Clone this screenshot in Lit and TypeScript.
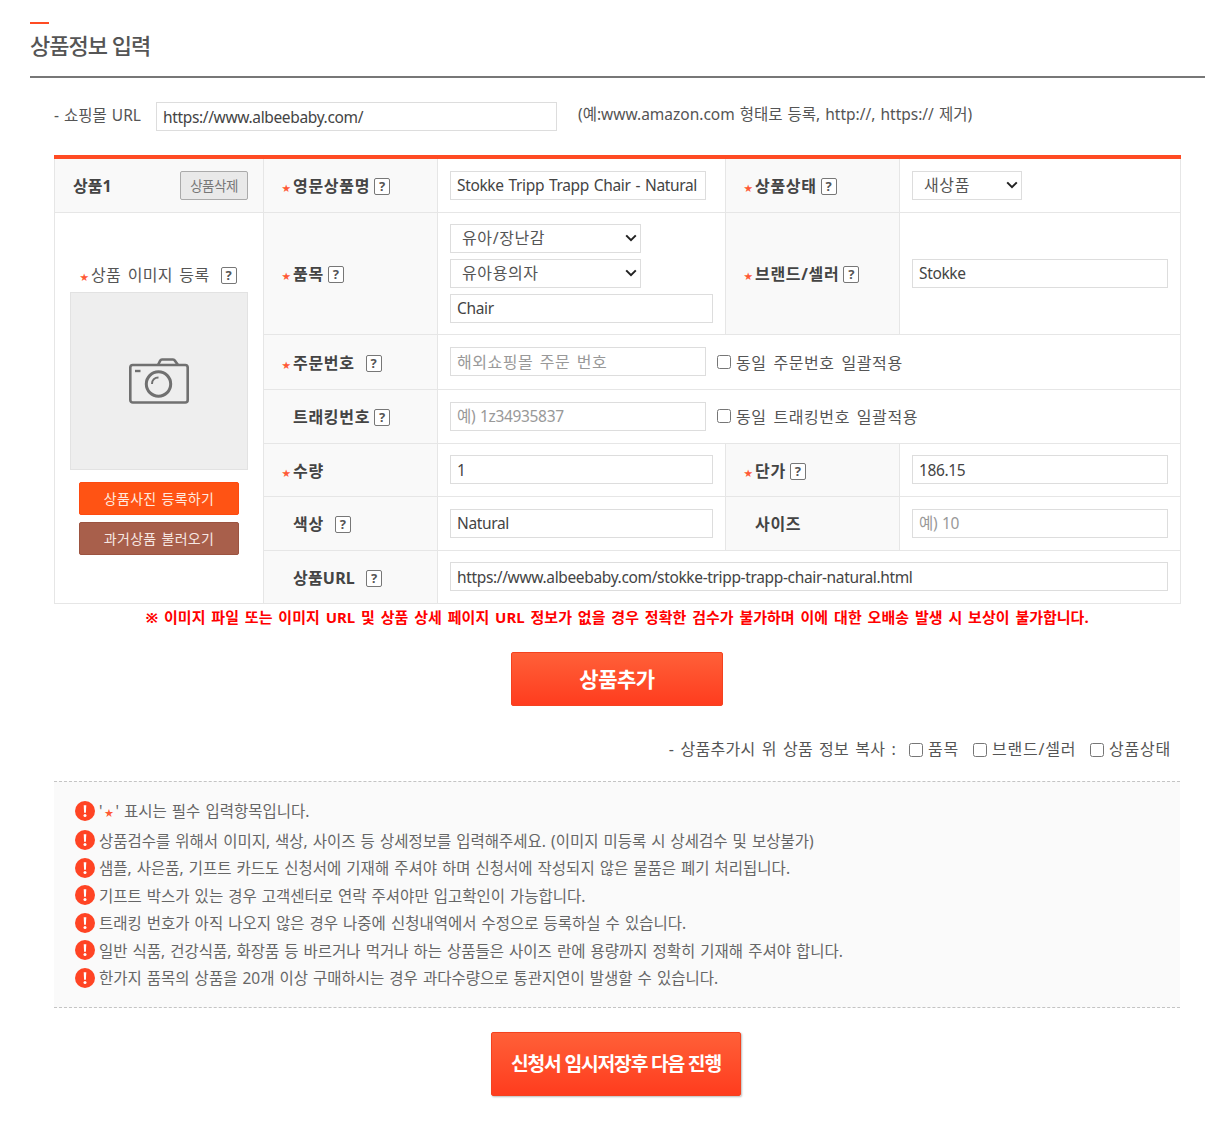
import { LitElement, html, css } from "lit";
import { customElement } from "lit/decorators.js";

const NOTES = [
  "상품검수를 위해서 이미지, 색상, 사이즈 등 상세정보를 입력해주세요. (이미지 미등록 시 상세검수 및 보상불가)",
  "샘플, 사은품, 기프트 카드도 신청서에 기재해 주셔야 하며 신청서에 작성되지 않은 물품은 폐기 처리됩니다.",
  "기프트 박스가 있는 경우 고객센터로 연락 주셔야만 입고확인이 가능합니다.",
  "트래킹 번호가 아직 나오지 않은 경우 나중에 신청내역에서 수정으로 등록하실 수 있습니다.",
  "일반 식품, 건강식품, 화장품 등 바르거나 먹거나 하는 상품들은 사이즈 란에 용량까지 정확히 기재해 주셔야 합니다.",
  "한가지 품목의 상품을 20개 이상 구매하시는 경우 과다수량으로 통관지연이 발생할 수 있습니다.",
];

const CHEVRON =
  "url(\"data:image/svg+xml,%3Csvg xmlns='http://www.w3.org/2000/svg' width='12' height='8' viewBox='0 0 12 8'%3E%3Cpath d='M1.2 1.4 6 6.2l4.8-4.8' fill='none' stroke='%23222' stroke-width='2'/%3E%3C/svg%3E\")";

@customElement("app-root")
export class AppRoot extends LitElement {
  static styles = css`
    :host {
      display: block;
      width: 1222px;
      height: 1125px;
      overflow: hidden;
      background: #fff;
      font-family: "Noto Sans", "Noto Sans CJK KR", sans-serif;
      color: #555;
      font-size: 16px;
      box-sizing: border-box;
      padding: 22px 17px 0 30px;
    }
    * { box-sizing: border-box; }
    .accent { width: 19px; height: 2px; background: #ff4b23; }
    h1 {
      margin: 0;
      height: 54px;
      border-bottom: 2px solid #777;
      font-size: 22px;
      font-weight: 500;
      line-height: 43px;
      letter-spacing: -1px;
      color: #555;
    }
    .content { padding-left: 24px; width: 1151px; }
    .shop {
      display: flex;
      align-items: center;
      height: 29px;
      margin-top: 24px;
      font-size: 15.5px;
    }
    .shop .lab { width: 102px; word-spacing: 1px; position: relative; top: -2px; white-space: nowrap; }
    .shop input { width: 401px; }
    .shop .hint { margin-left: 21px; word-spacing: 1px; position: relative; top: -3px; white-space: nowrap; }
    input[type="text"], select {
      height: 29px;
      border: 1px solid #ddd;
      border-radius: 0;
      background-color: #fff;
      font: inherit;
      font-size: 15.5px;
      letter-spacing: -0.35px;
      word-spacing: 1.2px;
      color: #444;
      padding: 0 6px;
      outline: none;
      margin: 0;
      display: block;
    }
    input::placeholder { color: #999; opacity: 1; }
    input.ko::placeholder { font-size: 16px; letter-spacing: 0.5px; word-spacing: 2px; }
    select {
      appearance: none;
      padding-left: 11px;
      color: #555;
      font-size: 16px;
      letter-spacing: 0.6px;
      word-spacing: 0;
      background-image: ${css([CHEVRON] as unknown as TemplateStringsArray)};
      background-repeat: no-repeat;
      background-position: right 3px center;
    }
    input.full { width: 100%; }
    table {
      margin-top: 24px;
      width: 1126px;
      table-layout: fixed;
      border-collapse: collapse;
      border-top: 4px solid #ff4b23;
      border-bottom: 1px solid #e6e6e6;
    }
    td, th {
      border: 1px solid #e6e6e6;
      padding: 0 12px;
      font-weight: 400;
      text-align: left;
      vertical-align: middle;
    }
    th {
      background: #f9f9f9;
      padding: 0 0 0 18px;
      font-weight: 700;
      color: #444;
      font-size: 16px;
      letter-spacing: 0.7px;
      white-space: nowrap;
    }
    .tight { letter-spacing: 0.2px; }
    .star {
      color: #ff5a36;
      font-size: 8.5px;
      display: inline-block;
      width: 11px;
      font-weight: 400;
      letter-spacing: 0;
      vertical-align: 1px;
    }
    .nostar { display: inline-block; width: 11px; }
    .q {
      display: inline-flex;
      align-items: center;
      justify-content: center;
      width: 16px;
      height: 17px;
      border: 1.5px solid #777;
      border-radius: 2px;
      font-size: 13px;
      line-height: 1;
      font-weight: 700;
      color: #555;
      letter-spacing: 0;
      margin-left: 4px;
      vertical-align: 0;
      position: relative;
      top: -1px;
      background: #fff;
    }
    .q.far { margin-left: 11px; }
    .head {
      background: #f9f9f9;
      padding: 0 15px 0 18px;
    }
    .head-in {
      display: flex;
      justify-content: space-between;
      align-items: center;
      font-weight: 700;
      color: #444;
    }
    .del {
      width: 68px;
      height: 29px;
      border: 1px solid #aaa;
      border-radius: 2px;
      background: #e9e9e9;
      color: #777;
      font: inherit;
      font-size: 13.5px;
      font-weight: 400;
      letter-spacing: -0.5px;
      padding: 0;
    }
    .photo {
      padding: 0 15px;
      vertical-align: top;
    }
    .photo-lab {
      text-align: left;
      height: 26px;
      margin-top: 49px;
      line-height: 26px;
      padding-left: 10px;
      white-space: nowrap;
      letter-spacing: 0.35px;
      word-spacing: 2px;
    }
    .drop {
      width: 178px;
      height: 178px;
      margin-top: 4px;
      background: #eee;
      border: 1px solid #e2e2e2;
      display: flex;
      align-items: center;
      justify-content: center;
    }
    .btn {
      display: block;
      width: 160px;
      height: 33px;
      margin: 12px 0 0 9px;
      border-radius: 2px;
      font: inherit;
      font-size: 14px;
      padding: 0;
      letter-spacing: 0.3px;
      word-spacing: 1px;
    }
    .btn + .btn { margin-top: 7px; }
    .b1 { background: #ff5314; border: 1px solid #ff4a10; color: #ffe9df; }
    .b2 { background: #a85f4b; border: 1px solid #9c5340; color: #f6e7e2; }
    .stack { display: flex; flex-direction: column; gap: 6px; }
    .chk { display: flex; align-items: center; gap: 5px; white-space: nowrap; letter-spacing: 0.6px; word-spacing: 2px; }
    .chk input, .copy input {
      width: 14px; height: 14px; margin: 0; accent-color: #777;
    }
    .cell-inline { display: flex; align-items: center; gap: 11px; }
    .warn {
      margin-top: 3px;
      height: 20px;
      text-align: center;
      color: #f00;
      font-weight: 700;
      font-size: 15px;
      line-height: 20px;
      width: 1126px;
      word-spacing: 2px;
      white-space: nowrap;
    }
    .cta {
      display: block;
      border: 1px solid #f4421f;
      border-radius: 2px;
      background: linear-gradient(#ff6038, #ff3c1e);
      color: #fff;
      font: inherit;
      font-weight: 700;
      padding: 0 0 2px;
    }
    .add { width: 212px; height: 54px; margin: 25px 0 0 457px; font-size: 21px; letter-spacing: -0.5px; }
    .copy {
      display: flex;
      justify-content: flex-end;
      align-items: center;
      width: 1117px;
      height: 22px;
      margin-top: 31px;
      white-space: nowrap;
    }
    .copy span { letter-spacing: 0.3px; word-spacing: 1.7px; margin-right: -1px; }
    .copy label { display: flex; align-items: center; gap: 5px; margin-left: 14px; letter-spacing: 0.75px; }
    .copy input { position: relative; top: 2px; }
    .notes {
      margin-top: 22px;
      width: 1126px;
      height: 227px;
      background: #fafafa;
      border-top: 1px dashed #c4c4c4;
      border-bottom: 1px dashed #c4c4c4;
      padding: 13px 0 0 21px;
      font-size: 15.5px;
      word-spacing: 1px;
      color: #666;
    }
    .note { display: flex; align-items: center; gap: 4px; height: 27.5px; white-space: nowrap; }
    .note.lead { height: 32px; }
    .note svg { flex: none; }
    .note .s { color: #ff5a36; font-size: 9px; vertical-align: 1px; padding: 0 2px; }
    .next { width: 250px; height: 64px; margin: 24px 0 0 437px; font-size: 19.3px; letter-spacing: -1.2px; box-shadow: 1px 1px 2px #bbb; }
  `;

  private q(far = false) {
    return html`<span class="q ${far ? "far" : ""}">?</span>`;
  }
  private star() {
    return html`<span class="star">★</span>`;
  }
  private nostar() {
    return html`<span class="nostar"></span>`;
  }
  private bang() {
    return html`<svg width="20" height="20" viewBox="0 0 20 20" aria-hidden="true">
      <circle cx="10" cy="10" r="10" fill="#ff4424"></circle>
      <path d="M8.7 4.2h2.6l-.4 7.6H9.1z" fill="#fff"></path>
      <circle cx="10" cy="14.6" r="1.5" fill="#fff"></circle>
    </svg>`;
  }
  private camera() {
    return html`<svg width="60" height="46" viewBox="0 0 60 46" fill="none" stroke="#707070" stroke-width="2.6" aria-hidden="true">
      <rect x="1.3" y="7" width="57.4" height="37.5" rx="2.5"></rect>
      <path d="M29 7l2.2-4.4c.4-.8 1-1.1 1.8-1.1h11c.8 0 1.4.3 1.8 1.1L49 7"></path>
      <circle cx="29.5" cy="26" r="12.2" stroke-width="3"></circle>
      <path d="M23 26c0-3.8 2.7-6.5 6.5-6.5" stroke-width="2"></path>
      <path d="M6 13h5.5" stroke-width="2.4"></path>
    </svg>`;
  }

  render() {
    return html`
      <div class="accent"></div>
      <h1>상품정보 입력</h1>
      <div class="content">
        <div class="shop">
          <span class="lab">- 쇼핑몰 URL</span>
          <input type="text" value="https://www.albeebaby.com/" />
          <span class="hint">(예:www.amazon.com 형태로 등록, http://, https:// 제거)</span>
        </div>

        <table>
          <colgroup>
            <col style="width:209px" /><col style="width:174px" /><col style="width:288px" /><col style="width:174px" /><col style="width:281px" />
          </colgroup>
          <tbody>
            <tr style="height:55px">
              <td class="head">
                <div class="head-in"><span>상품1</span><button class="del">상품삭제</button></div>
              </td>
              <th>${this.star()}영문상품명${this.q()}</th>
              <td><input class="full" type="text" style="width:256px" value="Stokke Tripp Trapp Chair - Natural" /></td>
              <th>${this.star()}상품상태${this.q()}</th>
              <td>
                <select style="width:110px"><option>새상품</option></select>
              </td>
            </tr>
            <tr style="height:122px">
              <td class="photo" rowspan="6">
                <div class="photo-lab">${this.star()}상품 이미지 등록${this.q(true)}</div>
                <div class="drop">${this.camera()}</div>
                <button class="btn b1">상품사진 등록하기</button>
                <button class="btn b2">과거상품 불러오기</button>
              </td>
              <th>${this.star()}품목${this.q()}</th>
              <td>
                <div class="stack">
                  <select style="width:191px"><option>유아/장난감</option></select>
                  <select style="width:191px"><option>유아용의자</option></select>
                  <input class="full" type="text" value="Chair" />
                </div>
              </td>
              <th>${this.star()}브랜드/셀러${this.q()}</th>
              <td><input class="full" type="text" value="Stokke" /></td>
            </tr>
            <tr style="height:55px">
              <th>${this.star()}주문번호${this.q(true)}</th>
              <td colspan="3">
                <div class="cell-inline">
                  <input class="ko" type="text" style="width:256px" placeholder="해외쇼핑몰 주문 번호" />
                  <label class="chk"><input type="checkbox" />동일 주문번호 일괄적용</label>
                </div>
              </td>
            </tr>
            <tr style="height:54px">
              <th>${this.nostar()}트래킹번호${this.q()}</th>
              <td colspan="3">
                <div class="cell-inline">
                  <input type="text" style="width:256px" placeholder="예) 1z34935837" />
                  <label class="chk"><input type="checkbox" />동일 트래킹번호 일괄적용</label>
                </div>
              </td>
            </tr>
            <tr style="height:53px">
              <th>${this.star()}수량</th>
              <td><input class="full" type="text" value="1" /></td>
              <th>${this.star()}단가${this.q()}</th>
              <td><input class="full" type="text" value="186.15" /></td>
            </tr>
            <tr style="height:54px">
              <th>${this.nostar()}색상${this.q(true)}</th>
              <td><input class="full" type="text" value="Natural" /></td>
              <th>${this.nostar()}사이즈</th>
              <td><input class="full" type="text" placeholder="예) 10" /></td>
            </tr>
            <tr style="height:53px">
              <th>${this.nostar()}<span class="tight">상품URL</span>${this.q(true)}</th>
              <td colspan="3"><input class="full" type="text" value="https://www.albeebaby.com/stokke-tripp-trapp-chair-natural.html" /></td>
            </tr>
          </tbody>
        </table>

        <div class="warn">※ 이미지 파일 또는 이미지 URL 및 상품 상세 페이지 URL 정보가 없을 경우 정확한 검수가 불가하며 이에 대한 오배송 발생 시 보상이 불가합니다.</div>
        <button class="cta add">상품추가</button>

        <div class="copy">
          <span>- 상품추가시 위 상품 정보 복사 :</span>
          <label><input type="checkbox" />품목</label>
          <label><input type="checkbox" />브랜드/셀러</label>
          <label><input type="checkbox" />상품상태</label>
        </div>

        <div class="notes">
          <div class="note lead">${this.bang()}<span>'<span class="s">★</span>' 표시는 필수 입력항목입니다.</span></div>
          ${NOTES.map((n) => html`<div class="note">${this.bang()}<span>${n}</span></div>`)}
        </div>

        <button class="cta next">신청서 임시저장후 다음 진행</button>
      </div>
    `;
  }
}
